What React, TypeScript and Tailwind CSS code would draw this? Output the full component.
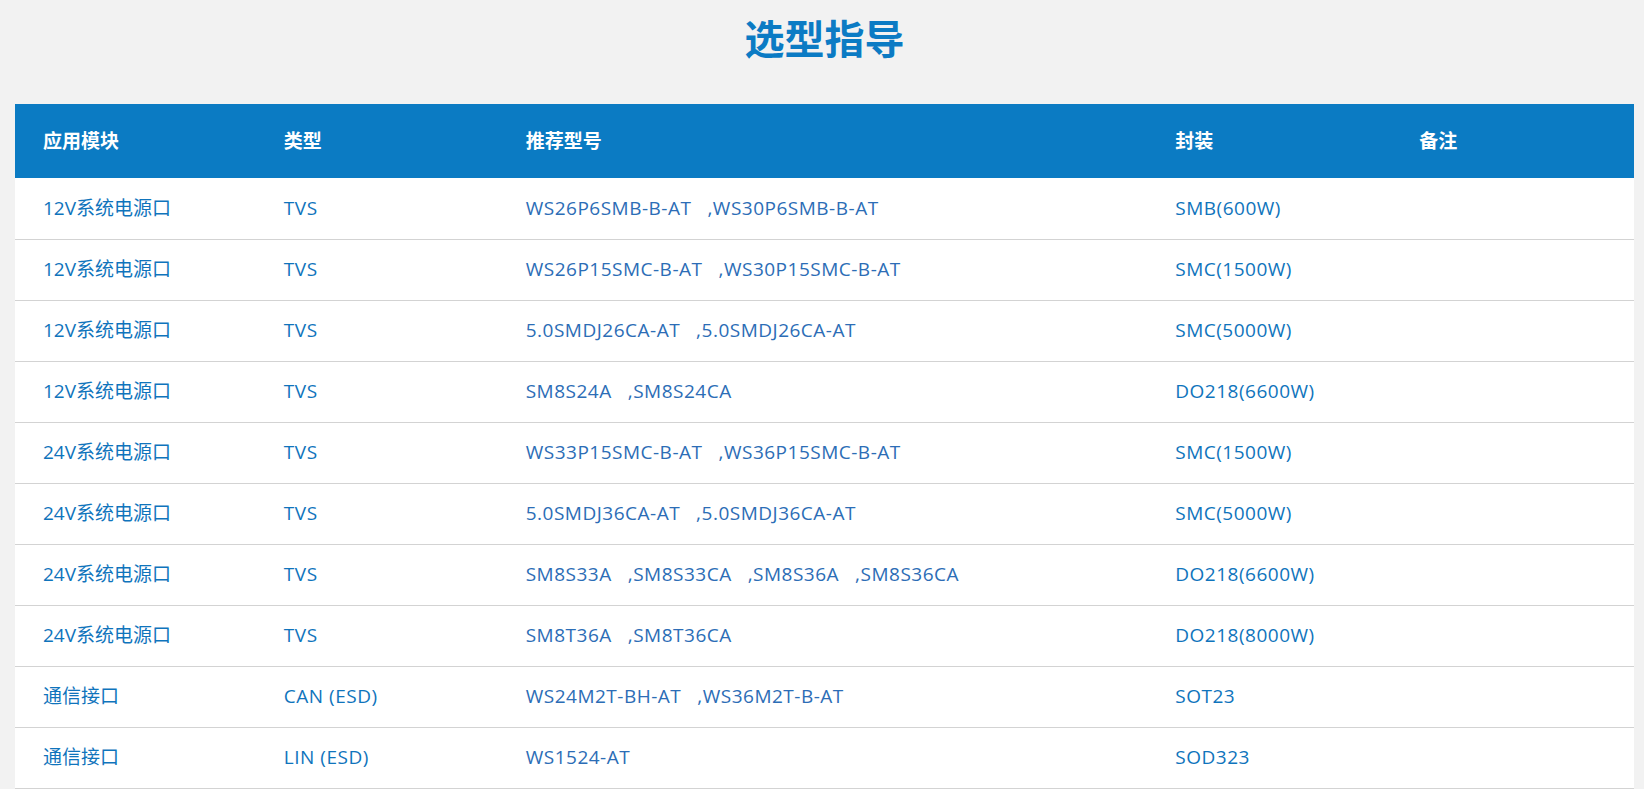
const rows: [string, string, string[], string][] = [
  ["12V系统电源口", "TVS", ["WS26P6SMB-B-AT", "WS30P6SMB-B-AT"], "SMB(600W)"],
  ["12V系统电源口", "TVS", ["WS26P15SMC-B-AT", "WS30P15SMC-B-AT"], "SMC(1500W)"],
  ["12V系统电源口", "TVS", ["5.0SMDJ26CA-AT", "5.0SMDJ26CA-AT"], "SMC(5000W)"],
  ["12V系统电源口", "TVS", ["SM8S24A", "SM8S24CA"], "DO218(6600W)"],
  ["24V系统电源口", "TVS", ["WS33P15SMC-B-AT", "WS36P15SMC-B-AT"], "SMC(1500W)"],
  ["24V系统电源口", "TVS", ["5.0SMDJ36CA-AT", "5.0SMDJ36CA-AT"], "SMC(5000W)"],
  ["24V系统电源口", "TVS", ["SM8S33A", "SM8S33CA", "SM8S36A", "SM8S36CA"], "DO218(6600W)"],
  ["24V系统电源口", "TVS", ["SM8T36A", "SM8T36CA"], "DO218(8000W)"],
  ["通信接口", "CAN (ESD)", ["WS24M2T-BH-AT", "WS36M2T-B-AT"], "SOT23"],
  ["通信接口", "LIN (ESD)", ["WS1524-AT"], "SOD323"],
];

const font = {
  fontFamily: '"Open Sans", "Noto Sans CJK SC", sans-serif',
};

function Models(props: { items: string[] }) {
  return (
    <span>
      {props.items.map((m, i) => (
        <span key={i}>
          {i > 0 && <span className="ml-[16px]">,</span>}
          {m}
        </span>
      ))}
    </span>
  );
}

export default function App() {
  return (
    <div className="min-h-[789px] bg-[#f2f2f2] pl-[15px] pr-[10px]" style={font}>
      <h1 className="pt-[16px] pb-[42px] text-center text-[40px] leading-[46px] font-bold text-[#0b7bc4]">
        选型指导
      </h1>
      <table className="w-full table-fixed border-collapse bg-white text-[19px]">
        <colgroup>
          <col className="w-[15%]" />
          <col className="w-[15%]" />
          <col className="w-[40%]" />
          <col className="w-[15%]" />
          <col className="w-[15%]" />
        </colgroup>
        <thead>
          <tr className="h-[74px] bg-[#0b7bc3] text-left font-bold text-white">
            <th className="pl-[28px]">应用模块</th>
            <th className="pl-[26px]">类型</th>
            <th className="pl-[25px]">推荐型号</th>
            <th className="pl-[27px]">封装</th>
            <th className="pl-[28px]">备注</th>
          </tr>
        </thead>
        <tbody>
          {rows.map((r, i) => (
            <tr key={i} className="h-[61px] border-b border-[#d3d3d3] text-[#0f74bc]">
              <td className="pl-[28px]">{r[0]}</td>
              <td className="pl-[26px] tracking-[0.5px]">{r[1]}</td>
              <td className="pl-[25px] tracking-[0.5px] text-[#2c6db6]">
                <Models items={r[2]} />
              </td>
              <td className="pl-[27px] tracking-[0.5px]">{r[3]}</td>
              <td className="pl-[28px]"></td>
            </tr>
          ))}
        </tbody>
      </table>
    </div>
  );
}
